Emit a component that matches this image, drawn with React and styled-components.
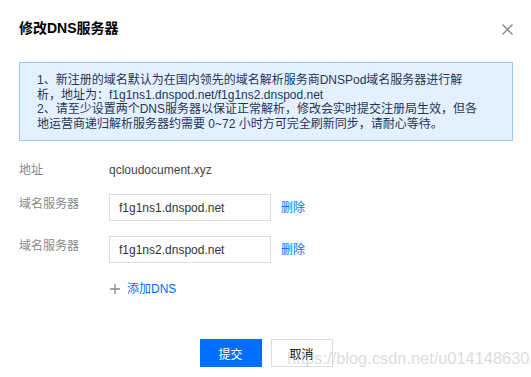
import React from 'react';
import styled, { createGlobalStyle } from 'styled-components';

const GlobalStyle = createGlobalStyle`
  html, body {
    margin: 0;
    padding: 0;
    background: #fff;
  }
  body {
    font-family: "Liberation Sans", "Noto Sans CJK SC", sans-serif;
    font-size: 12px;
    color: #333;
  }
`;

const Dialog = styled.div`
  position: relative;
  width: 531px;
  height: 377px;
  box-sizing: border-box;
  padding: 20px 18px 0 19px;
  background: #fff;
  overflow: hidden;
`;

const Header = styled.div`
  display: flex;
  justify-content: space-between;
  align-items: flex-start;
  height: 16px;
`;

const Title = styled.h3`
  margin: 0;
  font-size: 14px;
  line-height: 16px;
  font-weight: bold;
  color: #000;
`;

const Close = styled.button`
  display: flex;
  padding: 0;
  margin: 4px 0 0 0;
  border: 0;
  background: none;
  cursor: pointer;
`;

const Notice = styled.div`
  margin-top: 26px;
  padding: 10px 16px 9px 17px;
  background: #e5f0ff;
  border: 1px solid #97c7ff;
  color: #1d3659;
  line-height: 14.6px;
  white-space: nowrap;
`;

const Form = styled.div`
  display: flex;
  flex-direction: column;
  gap: 15px;
  margin-top: 20px;
`;

const Row = styled.div`
  display: flex;
  align-items: ${p => (p.$top ? 'flex-start' : 'center')};
  margin-top: ${p => p.$offset || 0}px;
`;

const Label = styled.div`
  width: 90px;
  flex: none;
  color: #888;
  line-height: 18px;
  padding-top: ${p => p.$pad || 0}px;
`;

const Value = styled.div`
  color: #444;
  line-height: 18px;
`;

const Input = styled.input`
  box-sizing: border-box;
  width: 162px;
  height: 27px;
  padding: 0 9px;
  border: 1px solid #ddd;
  font: inherit;
  font-size: 12px;
  color: #333;
  outline: none;
`;

const Link = styled.a`
  color: #006eff;
  text-decoration: none;
  cursor: pointer;
  line-height: 18px;
  margin-left: ${p => p.$gap || 0}px;
`;

const AddRow = styled.div`
  display: flex;
  align-items: center;
  gap: 7px;
  margin-left: 91px;
  margin-top: 2px;
  line-height: 18px;
`;

const Footer = styled.div`
  display: flex;
  justify-content: center;
  gap: 9px;
  margin-top: 41px;
`;

const Button = styled.button`
  box-sizing: border-box;
  width: 62px;
  height: 28px;
  font: inherit;
  font-size: 12px;
  cursor: pointer;
  border: 1px solid ${p => (p.$primary ? '#006eff' : '#ddd')};
  background: ${p => (p.$primary ? '#006eff' : '#fff')};
  color: ${p => (p.$primary ? '#fff' : '#000')};
`;

const Watermark = styled.div`
  position: absolute;
  left: 287px;
  top: 349px;
  font-family: "Liberation Sans", sans-serif;
  font-size: 16.4px;
  color: rgba(190, 190, 190, 0.55);
  pointer-events: none;
`;

const servers = ['f1g1ns1.dnspod.net', 'f1g1ns2.dnspod.net'];

export default function App() {
  return (
    <>
      <GlobalStyle />
      <Dialog>
        <Header>
          <Title>修改DNS服务器</Title>
          <Close aria-label="关闭">
            <svg width="11" height="11" viewBox="0 0 11 11">
              <path d="M0.5 0.5 L10.5 10.5 M10.5 0.5 L0.5 10.5" stroke="#888" strokeWidth="1.4" />
            </svg>
          </Close>
        </Header>
        <Notice>
          1、新注册的域名默认为在国内领先的域名解析服务商DNSPod域名服务器进行解
          <br />
          析，地址为：f1g1ns1.dnspod.net/f1g1ns2.dnspod.net
          <br />
          2、请至少设置两个DNS服务器以保证正常解析，修改会实时提交注册局生效，但各
          <br />
          地运营商递归解析服务器约需要 0~72 小时方可完全刷新同步，请耐心等待。
        </Notice>
        <Form>
          <Row>
            <Label>地址</Label>
            <Value>qcloudocument.xyz</Value>
          </Row>
          {servers.map(s => (
            <Row key={s} $top>
              <Label $pad={1}>域名服务器</Label>
              <Input defaultValue={s} />
              <Link $gap={10} style={{ paddingTop: 5 }}>删除</Link>
            </Row>
          ))}
          <AddRow>
            <svg width="10" height="10" viewBox="0 0 10 10">
              <path d="M5 0 V10 M0 5 H10" stroke="#888" strokeWidth="1.3" />
            </svg>
            <Link>添加DNS</Link>
          </AddRow>
        </Form>
        <Footer>
          <Button $primary>提交</Button>
          <Button>取消</Button>
        </Footer>
        <Watermark>https://blog.csdn.net/u014148630</Watermark>
      </Dialog>
    </>
  );
}
